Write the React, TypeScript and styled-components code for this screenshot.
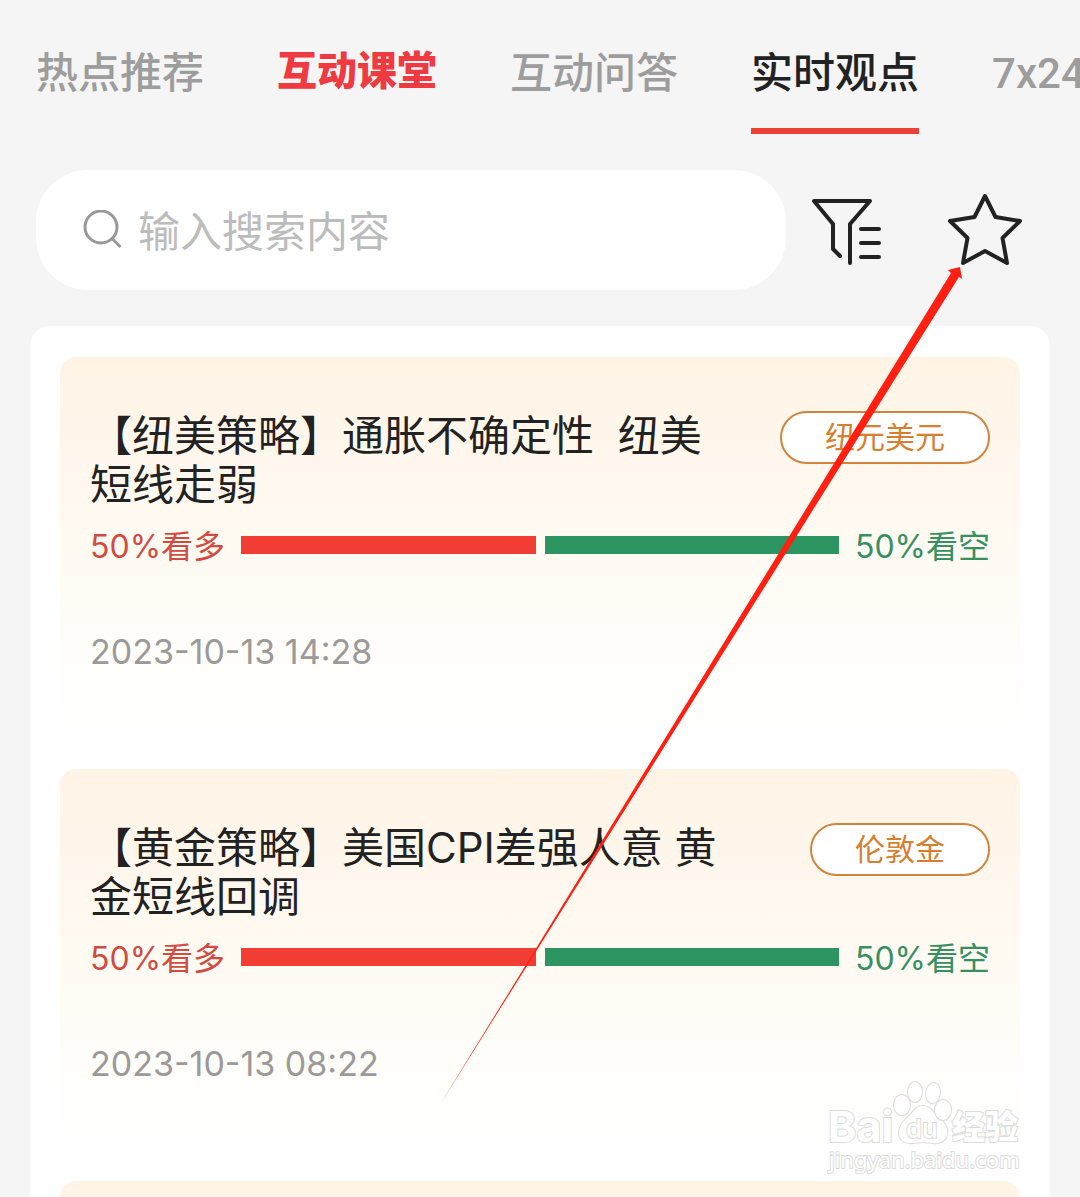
import React from "react";
import styled, { createGlobalStyle } from "styled-components";

const GlobalStyle = createGlobalStyle`
  * { box-sizing: border-box; }
  body {
    margin: 0;
    background: #f5f5f5;
    font-family: Inter, "Noto Sans CJK SC", sans-serif;
  }
`;

const Page = styled.div`
  position: relative;
  height: 100vh;
  overflow: hidden;
  background: #f5f5f5;
  color: #222;
`;

const Tabs = styled.nav`
  display: flex;
  align-items: flex-end;
  gap: 73px;
  padding: 44px 0 0 36px;
  overflow: hidden;
`;

const Tab = styled.a<{ $kind?: "active" | "promo" }>`
  flex: none;
  padding-bottom: ${(p) => (p.$kind === "promo" ? 28 : 24)}px;
  border-bottom: 6px solid ${(p) => (p.$kind === "active" ? "#ec3f36" : "transparent")};
  color: ${(p) => (p.$kind === "active" ? "#222" : p.$kind === "promo" ? "#ee3a40" : "#9d9d9d")};
  font-family: Roboto, "Noto Sans CJK SC", sans-serif;
  font-size: ${(p) => (p.$kind === "promo" ? 40 : 42)}px;
  font-weight: ${(p) => (p.$kind === "promo" ? 900 : 500)};
  line-height: ${(p) => (p.$kind === "promo" ? 56 : 60)}px;
  white-space: nowrap;
  text-decoration: none;
`;

const Tools = styled.div`
  display: flex;
  align-items: center;
  padding: 36px 57px 36px 36px;
`;

const SearchBox = styled.label`
  display: flex;
  flex: 1;
  align-items: center;
  gap: 16px;
  min-width: 0;
  height: 120px;
  margin-right: 25px;
  padding: 0 46px;
  border-radius: 52px;
  background: #fff;
`;

const SearchInput = styled.input`
  flex: 1;
  min-width: 0;
  padding: 4px 0 0;
  border: 0;
  outline: 0;
  background: none;
  color: #222;
  font: 400 42px/60px Inter, "Noto Sans CJK SC", sans-serif;
  &::placeholder { color: #bcbcbc; opacity: 1; }
`;

const Actions = styled.div`
  display: flex;
  flex: none;
  gap: 64px;
`;

const IconButton = styled.button`
  display: flex;
  align-items: center;
  padding: 0;
  border: 0;
  background: none;
  color: #222;
  cursor: pointer;
`;

const Panel = styled.main`
  display: flex;
  flex-direction: column;
  gap: 30px;
  margin: 0 30px;
  padding: 31px 30px;
  border-radius: 20px;
  background: #fff;
`;

const Card = styled.article`
  min-height: 382px;
  padding: 54px 30px 63px;
  border-radius: 16px;
  background: linear-gradient(#fff4e6, #fff8ef 35%, #fffcf5 60%, #fefefd 90%, #fff);
`;

const CardHead = styled.header`
  display: flex;
  align-items: flex-start;
  justify-content: space-between;
`;

const Title = styled.h2`
  flex: 0 1 640px;
  margin: 0;
  font-size: 42px;
  font-weight: 400;
  line-height: 49px;
  white-space: pre-wrap;
`;

const Tag = styled.span`
  flex: none;
  padding: 0 43px;
  border: 2px solid #d0843c;
  border-radius: 27px;
  background: #fff;
  color: #d67f30;
  font-size: 30px;
  line-height: 49px;
`;

const Vote = styled.div`
  display: flex;
  align-items: center;
  margin-top: 10px;
`;

const VoteLabel = styled.span<{ $side: "long" | "short" }>`
  flex: 0 0 151px;
  padding-top: 4px;
  color: ${(p) => (p.$side === "long" ? "#d24a40" : "#379062")};
  font-size: 32px;
  line-height: 48px;
  text-align: ${(p) => (p.$side === "long" ? "left" : "right")};
`;

const Bars = styled.div`
  display: flex;
  flex: 1;
  gap: 9px;
`;

const Bar = styled.div<{ $side: "long" | "short" }>`
  flex: 1 1 0;
  height: 18px;
  background: ${(p) => (p.$side === "long" ? "#f23d34" : "#2c9561")};
`;

const Time = styled.time`
  display: block;
  margin-top: 57px;
  color: #9c9a98;
  font-size: 34px;
  line-height: 48px;
`;

const Pointer = styled.svg`
  position: absolute;
  top: 0;
  left: 0;
  pointer-events: none;
`;

const Watermark = styled.svg`
  position: absolute;
  right: 52px;
  bottom: 19px;
  pointer-events: none;
`;

const posts = [
  { title: "【纽美策略】通胀不确定性  纽美短线走弱", tag: "纽元美元", long: 50, time: "2023-10-13 14:28" },
  { title: "【黄金策略】美国CPI差强人意 黄金短线回调", tag: "伦敦金", long: 50, time: "2023-10-13 08:22" },
];

export default function App() {
  return (
    <Page>
      <GlobalStyle />
      <Tabs>
        <Tab href="#hot">热点推荐</Tab>
        <Tab href="#class" $kind="promo">互动课堂</Tab>
        <Tab href="#qa">互动问答</Tab>
        <Tab href="#views" $kind="active" aria-current="page">实时观点</Tab>
        <Tab href="#live">7x24</Tab>
      </Tabs>

      <Tools>
        <SearchBox>
          <svg width="40" height="40" viewBox="0 0 40 40" fill="none" stroke="#999" strokeWidth="3">
            <circle cx="19" cy="17" r="16" />
            <path d="M30 28.500l8.500 8.500" />
          </svg>
          <SearchInput type="text" placeholder="输入搜索内容" aria-label="输入搜索内容" />
        </SearchBox>
        <Actions>
          <IconButton type="button" aria-label="筛选">
            <svg width="72" height="72" viewBox="0 0 72 72" fill="none" stroke="currentColor" strokeWidth="4" strokeLinecap="round" strokeLinejoin="round">
              <path d="M29 62l-7-7V30L3 7h56L39 30v39M50 35h18M50 49h18M50 63h18" />
            </svg>
          </IconButton>
          <IconButton type="button" aria-label="收藏">
            <svg width="76" height="76" viewBox="0 0 76 76" fill="none" stroke="currentColor" strokeWidth="4" strokeLinejoin="round">
              <path d="M38 4l10.500 21L73 29 55.500 46 60 71 38 59 16 71l4.500-25L3 29l24.500-4z" />
            </svg>
          </IconButton>
        </Actions>
      </Tools>

      <Panel>
        {posts.map((post) => (
          <Card key={post.time}>
            <CardHead>
              <Title>{post.title}</Title>
              <Tag>{post.tag}</Tag>
            </CardHead>
            <Vote>
              <VoteLabel $side="long">{post.long}%看多</VoteLabel>
              <Bars>
                <Bar $side="long" style={{ flexGrow: post.long }} />
                <Bar $side="short" style={{ flexGrow: 100 - post.long }} />
              </Bars>
              <VoteLabel $side="short">{100 - post.long}%看空</VoteLabel>
            </Vote>
            <Time>{post.time}</Time>
          </Card>
        ))}
        <Card />
      </Panel>

      <Watermark width="204" height="100" viewBox="0 0 204 100" fill="#fff" stroke="#dcdcdc" strokeWidth="2" paintOrder="stroke" fontFamily='Inter, "Noto Sans CJK SC", sans-serif'>
        <text x="4" y="64" fontSize="43" fontWeight="700">Bai</text>
        <path d="M99 28c8 0 11 8 17 13 5 4 8 9 7 15-1 7-7 10-14 9-7-1-13-1-20 0-8 1-14-3-14-10 0-6 3-10 7-14 6-5 9-13 17-13z" />
        <ellipse cx="78" cy="27" rx="8" ry="10" />
        <ellipse cx="91" cy="14" rx="7" ry="10" />
        <ellipse cx="109" cy="15" rx="7" ry="10" transform="rotate(8 109 15)" />
        <ellipse cx="119" cy="32" rx="8" ry="10" />
        <text x="82" y="60" fontSize="26" fontWeight="500">du</text>
        <text x="128" y="61" fontSize="33" fontWeight="900">经验</text>
        <text x="5" y="90" fontSize="22" fontFamily='"Noto Sans", sans-serif'>jingyan.baidu.com</text>
      </Watermark>

      <Pointer width="1080" height="1197" viewBox="0 0 1080 1197" aria-hidden="true">
        <path d="M441 1103L951 273l-3-3 12-3 2 12-3-2z" fill="#ff2012" />
      </Pointer>
    </Page>
  );
}
